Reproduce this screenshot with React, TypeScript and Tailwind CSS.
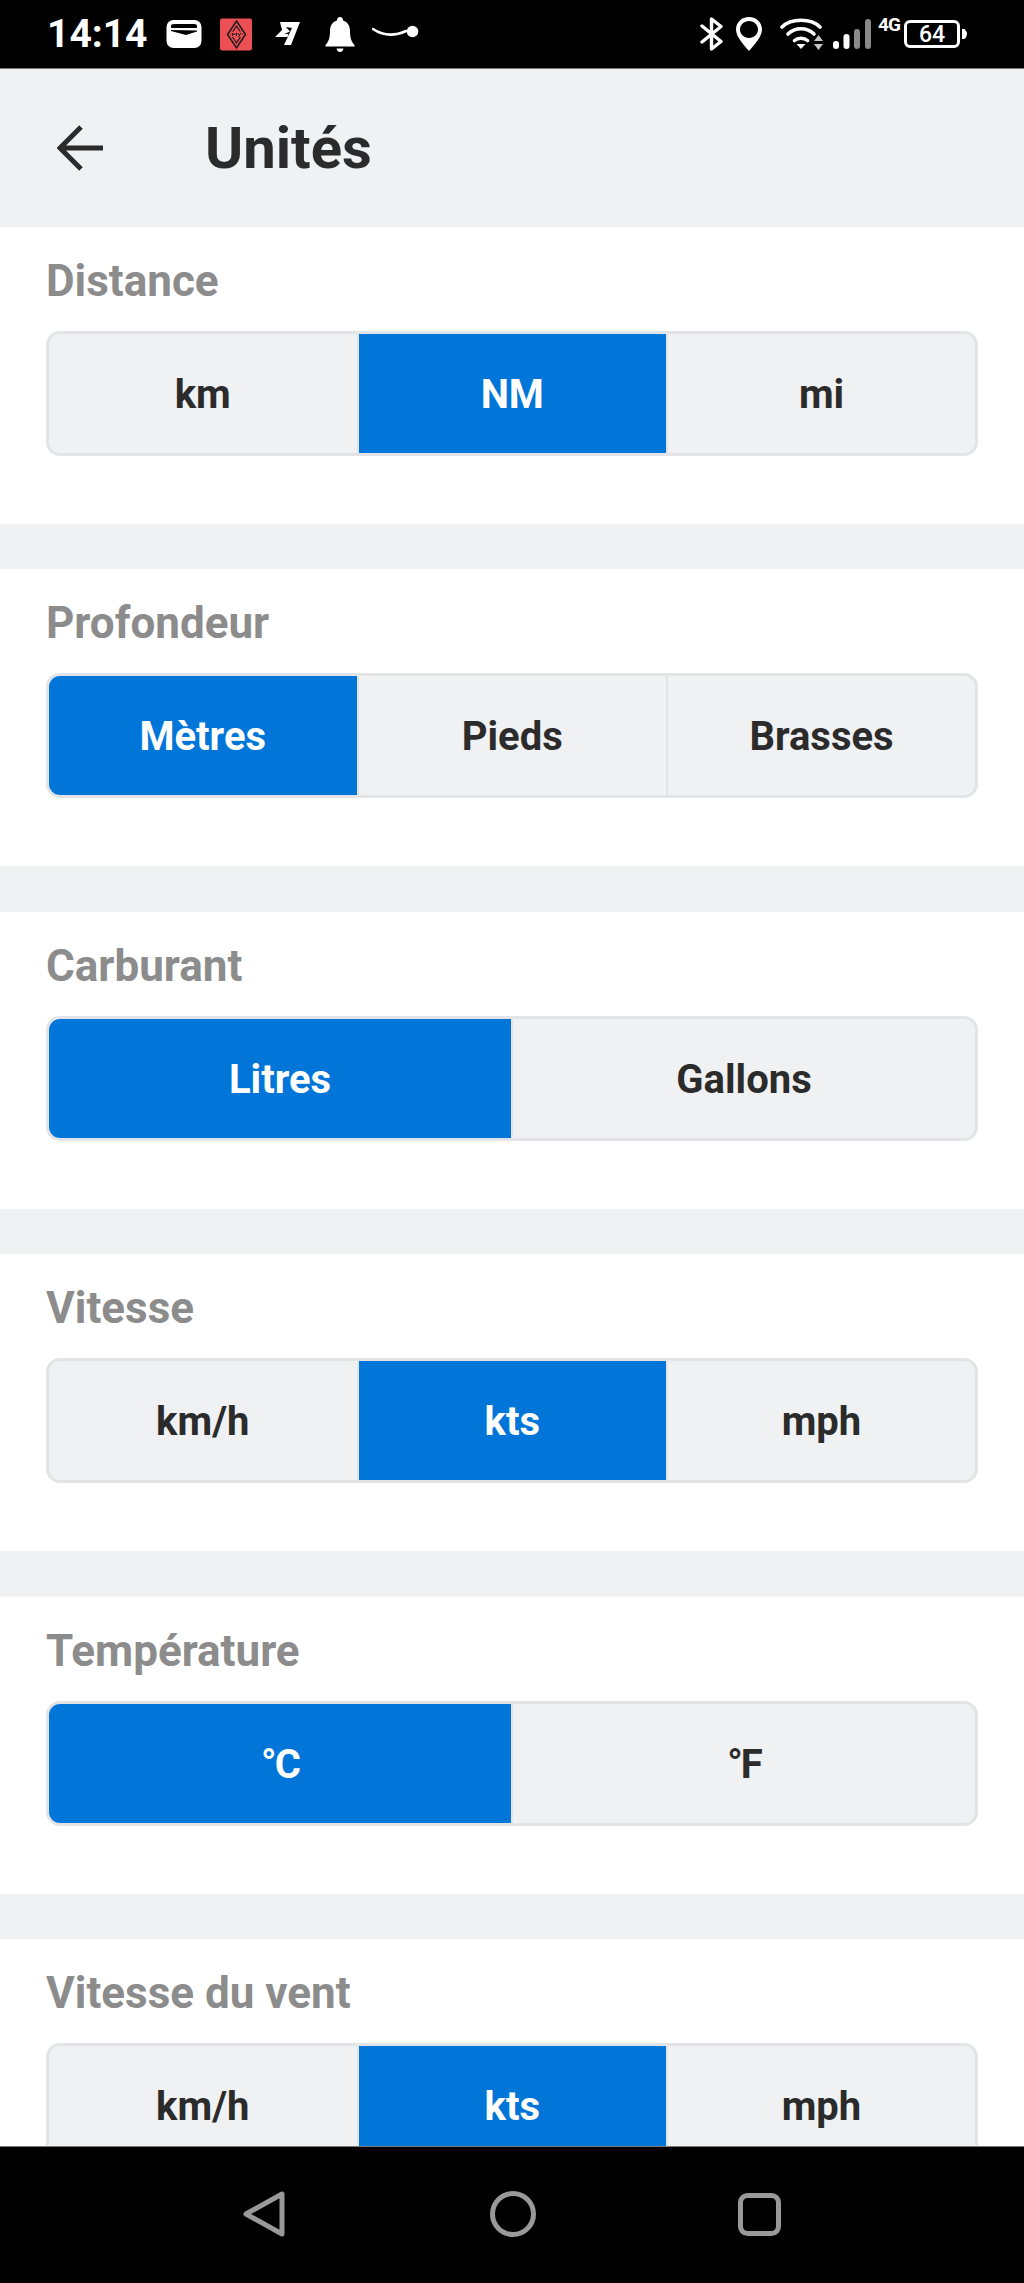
import React from "react";

const font = { fontFamily: "Roboto, sans-serif" };

function Seg({ label, options, active }: { label: string; options: string[]; active: number }) {
  const three = options.length === 3;
  return (
    <section className="bg-white h-[297px] mb-[45.4px] pt-[30px] px-[46px] shrink-0">
      <h2 className="text-[44px] leading-[48px] font-bold text-[#8c8c8c]">{label}</h2>
      <div className="mt-[26px] flex h-[125px] border-[3px] border-[#e3e4e8] rounded-[14px] overflow-hidden bg-[#f0f1f3]">
        {options.map((o, i) => {
          const last = i === options.length - 1;
          return (
            <div
              key={o}
              className={
                "flex items-center justify-center pt-[3px] text-[40px] font-bold " +
                (last && three ? "w-[307px] flex-none " : "flex-1 ") +
                (last ? "" : "border-r-[2px] border-[#e3e4e8] ") +
                (o.startsWith("°") ? "tracking-[-2px] " : "") +
                (i === active ? "bg-[#0175d8] text-white" : "text-[#2b2b2b]")
              }
            >
              {o}
            </div>
          );
        })}
      </div>
    </section>
  );
}

function StatusLeft() {
  return (
    <div className="flex items-center">
      <span className="text-[39px] leading-none font-bold text-white ml-[47px] w-[119px]">14:14</span>
      <svg width="36" height="30" viewBox="0 0 36 30" className="mr-[18px]">
        <rect x="0.5" y="1" width="35" height="28" rx="7" fill="#fff" />
        <path d="M5 7 Q5 5 8 5 L28 5 Q31 5 31 7 L31 9 L5 9 Z" fill="#000" />
        <path d="M5 12 L20 16 L31 12.5 L31 11.5 L5 11 Z" fill="#000" />
      </svg>
      <svg width="33" height="33" viewBox="0 0 33 33" className="mr-[22px]">
        <rect width="32" height="32" y="0.5" rx="2" fill="#ec5055" />
        <path d="M16.5 3 L25.5 16.5 L16.5 30 L7.5 16.5 Z" fill="none" stroke="#1a1a1a" strokeWidth="1.5" />
        <path d="M16.5 8 L22 16.5 L16.5 25 L11 16.5 Z" fill="none" stroke="#1a1a1a" strokeWidth="1.2" />
        <rect x="11" y="13.5" width="11" height="5.5" fill="#ec5055" />
        <path d="M12.5 18 L12.5 15 L14.5 17 L16.5 15 L16.5 18 M18 15 L19.5 17.5 M21 15 L18.5 19" fill="none" stroke="#1a1a1a" strokeWidth="1" />
      </svg>
      <svg width="26" height="26" viewBox="0 0 26 26" className="mr-[24px]">
        <path d="M5 1 L25 1 L16 24 L9 24 L17 7 L11 6 L15 10.5 L9.5 13 L13.5 13 L12.5 16 L0 16 L7 9 Z" fill="#fff" />
      </svg>
      <svg width="30" height="35" viewBox="0 0 30 35" className="mr-[17px]">
        <path d="M15 0 C17 0 18 1.5 18 3.5 C23 5 25 9 25 14 C25 21 26.5 25 29.5 28 L29.5 29.5 L0.5 29.5 L0.5 28 C3.5 25 5 21 5 14 C5 9 7 5 12 3.5 C12 1.5 13 0 15 0 Z" fill="#fff" />
        <path d="M11.5 31.5 L18.5 31.5 C18 34 16.5 35 15 35 C13.5 35 12 34 11.5 31.5 Z" fill="#fff" />
      </svg>
      <svg width="47" height="20" viewBox="0 0 47 20">
        <path d="M1 5 C10 11 22 12.5 34 7" fill="none" stroke="#fff" strokeWidth="2.6" strokeLinecap="round" />
        <circle cx="40.5" cy="7.5" r="5.8" fill="#fff" />
      </svg>
    </div>
  );
}

function StatusRight() {
  return (
    <div className="flex items-center">
      <svg width="23" height="34" viewBox="0 0 23 34" className="mr-[13px]">
        <path d="M2 9 L21 24.5 L11.5 32 L11.5 2 L21 9.5 L2 25" fill="none" stroke="#fff" strokeWidth="3.4" strokeLinejoin="round" strokeLinecap="round" />
      </svg>
      <svg width="26" height="34" viewBox="0 0 26 34" className="mr-[18px]">
        <path fillRule="evenodd" d="M13 0 C20.5 0 26 5.5 26 12.5 C26 20 18 28 13 34 C8 28 0 20 0 12.5 C0 5.5 5.5 0 13 0 Z M13 4 C8 4 4 8 4 12.5 C4 17 8 21 13 21 C18 21 22 17 22 12.5 C22 8 18 4 13 4 Z" fill="#fff" />
      </svg>
      <svg width="43" height="32" viewBox="0 0 43 32" className="mr-[10px]">
        <path d="M2 9 C11 0 31 0 40 9" fill="none" stroke="#fff" strokeWidth="3.6" strokeLinecap="round" />
        <path d="M8 16 C15 9 27 9 34 16" fill="none" stroke="#fff" strokeWidth="3.6" strokeLinecap="round" />
        <path d="M14.5 22.5 C18 19.5 24 19.5 27.5 22.5" fill="none" stroke="#fff" strokeWidth="3.6" strokeLinecap="round" />
        <path d="M16.5 26 L25.5 26 L21 31 Z" fill="#fff" />
        <path d="M38.5 17 L43 23 L34 23 Z M34 26 L43 26 L38.5 32 Z" fill="#c4c4c4" />
      </svg>
      <svg width="38" height="30" viewBox="0 0 38 30" className="mr-[7px]">
        <rect x="0" y="22" width="6" height="8" rx="3" fill="#fff" />
        <rect x="10.5" y="15" width="6" height="15" rx="3" fill="#fff" />
        <rect x="21" y="10" width="6" height="20" rx="3" fill="#8a8a8a" />
        <rect x="32" y="0" width="6" height="30" rx="3" fill="#8a8a8a" />
      </svg>
      <span className="text-[19px] leading-none font-bold text-white self-start mt-[-2px] w-[22px] mr-[4px] tracking-[-1px]">4G</span>
      <div className="w-[56px] h-[28px] border-[3px] border-white rounded-[6px] flex items-center justify-center text-[23px] font-medium text-white leading-none">64</div>
      <svg width="5" height="10" viewBox="0 0 5 10" className="ml-[2px]">
        <path d="M0 0 L2.5 0 Q5 2.5 5 5 Q5 7.5 2.5 10 L0 10 Z" fill="#fff" />
      </svg>
    </div>
  );
}

export default function App() {
  return (
    <div style={font} className="w-[1024px] h-[2283px] bg-[#f0f1f3] flex flex-col overflow-hidden">
      <div className="h-[69px] shrink-0 bg-black flex items-center justify-between pr-[57px] border-b border-[#777]">
        <StatusLeft />
        <StatusRight />
      </div>
      <header className="h-[158px] shrink-0 bg-[#f0f1f3] flex items-center">
        <svg width="48" height="46" viewBox="0 0 48 46" className="ml-[57px]">
          <path d="M46 23 L3 23 M24 2 L3 23 L24 44" fill="none" stroke="#2b2b2b" strokeWidth="5" />
        </svg>
        <h1 className="ml-[100px] text-[58px] leading-none font-bold text-[#2b2b2b]">Unités</h1>
      </header>
      <main className="flex-1 min-h-0 overflow-hidden flex flex-col">
        <Seg label="Distance" options={["km", "NM", "mi"]} active={1} />
        <Seg label="Profondeur" options={["Mètres", "Pieds", "Brasses"]} active={0} />
        <Seg label="Carburant" options={["Litres", "Gallons"]} active={0} />
        <Seg label="Vitesse" options={["km/h", "kts", "mph"]} active={1} />
        <Seg label="Température" options={["°C", "°F"]} active={0} />
        <Seg label="Vitesse du vent" options={["km/h", "kts", "mph"]} active={1} />
      </main>
      <nav className="h-[137px] shrink-0 bg-black border-t border-[#777] flex items-center justify-center">
        <div className="flex items-center mt-[-2px]">
          <svg width="42" height="46" viewBox="0 0 42 46">
            <path d="M39 3 L39 43 L3 23 Z" fill="none" stroke="#999" strokeWidth="5" strokeLinejoin="round" />
          </svg>
          <svg width="46" height="46" viewBox="0 0 46 46" className="ml-[205px] mr-[202px]">
            <circle cx="23" cy="23" r="20.5" fill="none" stroke="#999" strokeWidth="5" />
          </svg>
          <svg width="43" height="43" viewBox="0 0 43 43">
            <rect x="2.5" y="2.5" width="38" height="38" rx="7" fill="none" stroke="#999" strokeWidth="5" />
          </svg>
        </div>
      </nav>
    </div>
  );
}
